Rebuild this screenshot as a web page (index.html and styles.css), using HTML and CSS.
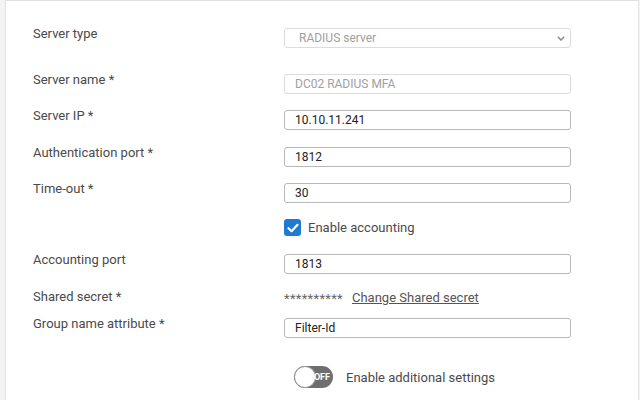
FILE: index.html
```html
<!DOCTYPE html>
<html>
<head>
<meta charset="utf-8">
<link rel="stylesheet" href="styles.css">
</head>
<body>
<div class="page">
  <div class="card">
    <div class="row row-first">
      <div class="label">Server type</div>
      <div class="field select disabled">
        <span class="value">RADIUS server</span>
        <svg class="chev" width="8" height="5" viewBox="0 0 8 5"><path d="M0.8 0.8 L4 4 L7.2 0.8" fill="none" stroke="#8a8a8a" stroke-width="1.5"/></svg>
      </div>
    </div>
    <div class="row mt-26">
      <div class="label">Server name *</div>
      <div class="field disabled"><span class="value">DC02 RADIUS MFA</span></div>
    </div>
    <div class="row mt-16">
      <div class="label">Server IP *</div>
      <div class="field"><span class="value">10.10.11.241</span></div>
    </div>
    <div class="row mt-17">
      <div class="label">Authentication port *</div>
      <div class="field"><span class="value">1812</span></div>
    </div>
    <div class="row mt-16">
      <div class="label">Time-out *</div>
      <div class="field"><span class="value">30</span></div>
    </div>
    <div class="row mt-16">
      <div class="label"></div>
      <div class="check-wrap">
        <span class="checkbox">
          <svg width="12" height="10" viewBox="0 0 12 10"><path d="M1.5 5.2 L4.6 8.2 L10.5 1.8" fill="none" stroke="#fff" stroke-width="2.2" stroke-linecap="round" stroke-linejoin="round"/></svg>
        </span>
        <span class="check-text">Enable accounting</span>
      </div>
    </div>
    <div class="row mt-18">
      <div class="label">Accounting port</div>
      <div class="field"><span class="value">1813</span></div>
    </div>
    <div class="row mt-14 row-text">
      <div class="label">Shared secret *</div>
      <div class="secret">
        <span class="stars">**********</span>
        <a class="link">Change Shared secret</a>
      </div>
    </div>
    <div class="row mt-12">
      <div class="label">Group name attribute *</div>
      <div class="field"><span class="value">Filter-Id</span></div>
    </div>
    <div class="row mt-28">
      <div class="label"></div>
      <div class="toggle-wrap">
        <span class="toggle"><span class="knob"></span><span class="off">OFF</span></span>
        <span class="toggle-text">Enable additional settings</span>
      </div>
    </div>
  </div>
</div>
</body>
</html>
```
FILE: styles.css
```css
html, body {
  margin: 0;
  padding: 0;
  background: #f4f4f4;
  font-family: Roboto, "Liberation Sans", Arial, sans-serif;
  overflow: hidden;
}
.page {
  padding: 0 1px 0 5px;
  height: 400px;
}
.card {
  background: #fff;
  border: 1px solid #e2e2e2;
  border-bottom: none;
  height: 420px;
  padding: 27px 0 0 27px;
  box-sizing: border-box;
}
.row {
  display: flex;
  align-items: flex-start;
}
.mt-12 { margin-top: 12px; }
.mt-14 { margin-top: 14px; }
.mt-16 { margin-top: 16px; }
.mt-17 { margin-top: 17px; }
.mt-18 { margin-top: 18px; }
.mt-26 { margin-top: 26px; }
.mt-28 { margin-top: 28px; }
.label {
  width: 251px;
  flex: none;
  font-size: 13px;
  line-height: 16px;
  margin-top: -2px;
  color: #4a4a4a;
}
.field {
  width: 287px;
  height: 20px;
  box-sizing: border-box;
  border: 1px solid #b9b9b9;
  border-radius: 3px;
  display: flex;
  align-items: center;
  padding: 0 10px;
  font-size: 12px;
  color: #222;
}
.field.disabled {
  border-color: #dcdcdc;
  color: #a0a0a0;
}
.select {
  justify-content: space-between;
  padding-left: 14px;
  padding-right: 5px;
}
.check-wrap {
  display: flex;
  align-items: center;
  height: 17px;
}
.checkbox {
  width: 17px;
  height: 17px;
  box-sizing: border-box;
  background: #1f7ad1;
  border-radius: 3px;
  display: flex;
  align-items: center;
  justify-content: center;
}
.check-text {
  margin-left: 7px;
  font-size: 13px;
  color: #4a4a4a;
}
.row-text {
  height: 18px;
}
.row-text .label {
  margin-top: 1px;
}
.secret {
  display: flex;
  align-items: center;
  font-size: 13px;
  line-height: 16px;
  margin-top: 2px;
}
.stars {
  color: #666;
  font-size: 13px;
  letter-spacing: 0.3px;
  position: relative;
  top: 1px;
}
.link {
  margin-left: 9px;
  color: #555;
  text-decoration: underline;
  font-size: 13px;
}
.toggle-wrap {
  display: flex;
  align-items: center;
  margin-left: 10px;
}
.toggle {
  position: relative;
  width: 39px;
  height: 22px;
  border-radius: 11px;
  background: #6e6e6e;
  display: block;
}
.knob {
  position: absolute;
  left: 0;
  top: 0;
  width: 22px;
  height: 22px;
  box-sizing: border-box;
  border-radius: 50%;
  background: #fff;
  border: 1px solid #9a9a9a;
}
.off {
  position: absolute;
  right: 3px;
  top: 5px;
  font-size: 9px;
  line-height: 12px;
  font-weight: bold;
  color: #fff;
}
.toggle-text {
  margin-left: 13px;
  font-size: 13px;
  color: #4a4a4a;
}
```
